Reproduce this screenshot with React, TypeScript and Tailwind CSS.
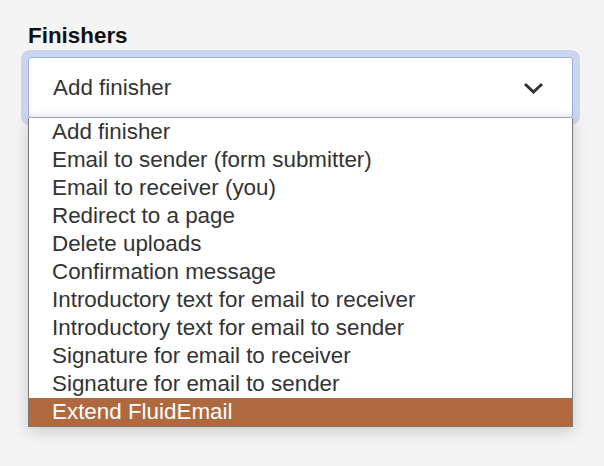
import { useState } from "react";

const options = [
  "Add finisher",
  "Email to sender (form submitter)",
  "Email to receiver (you)",
  "Redirect to a page",
  "Delete uploads",
  "Confirmation message",
  "Introductory text for email to receiver",
  "Introductory text for email to sender",
  "Signature for email to receiver",
  "Signature for email to sender",
  "Extend FluidEmail",
];

// Finisher select, shown with its option list open
export default function App() {
  const [active] = useState(options.length - 1);

  return (
    <div
      className="min-h-[466px] bg-[#f4f4f4] pt-[20px] pl-[28px] pr-[31px] text-[22.4px] leading-[1.4]"
      style={{ fontFamily: '"Liberation Sans", Arial, sans-serif' }}
    >
      <label className="block font-bold text-[#111]">Finishers</label>
      <div className="relative mt-[6px]">
        <div className="flex h-[61px] items-center justify-between rounded-[3px] border border-[#98aee0] bg-white pl-[24px] pr-[28px] text-[#333] shadow-[0_0_0_7px_#cdd5ee,inset_0_-3px_4px_rgba(0,0,0,0.04)]">
          <span>Add finisher</span>
          <svg width="21" height="12" viewBox="0 0 21 12" fill="none">
            <path d="M2 2l8.5 8 8.5-8" stroke="#333" strokeWidth="3" />
          </svg>
        </div>
        <ul className="absolute left-0 right-0 top-full z-10 border border-t-0 border-[#7a7a7a] bg-white shadow-[0_4px_14px_rgba(0,0,0,0.18)]">
          {options.map((o, i) => (
            <li
              key={o}
              className={
                i === active
                  ? "h-[28px] bg-[#b0693e] pl-[23px] leading-[28px] text-white"
                  : "h-[28px] pl-[23px] leading-[28px] text-[#333]"
              }
            >
              {o}
            </li>
          ))}
        </ul>
      </div>
    </div>
  );
}
